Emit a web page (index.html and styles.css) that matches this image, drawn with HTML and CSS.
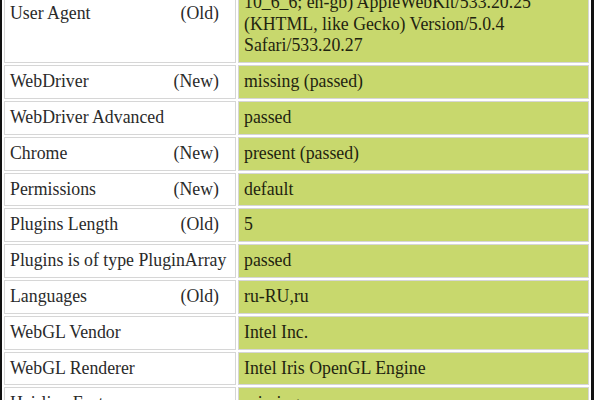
FILE: index.html
```html
<!DOCTYPE html>
<html>
<head>
<meta charset="utf-8">
<link rel="stylesheet" href="styles.css">
</head>
<body>
<table class="results">
  <tr>
    <td class="label"><span>User Agent</span><span class="tag">(Old)</span></td>
    <td class="result">Mozilla/5.0 (Macintosh; U; Intel Mac OS X 10_6_6; en-gb) AppleWebKit/533.20.25 (KHTML, like Gecko) Version/5.0.4 Safari/533.20.27</td>
  </tr>
  <tr>
    <td class="label"><span>WebDriver</span><span class="tag">(New)</span></td>
    <td class="result">missing (passed)</td>
  </tr>
  <tr>
    <td class="label"><span>WebDriver Advanced</span></td>
    <td class="result">passed</td>
  </tr>
  <tr>
    <td class="label"><span>Chrome</span><span class="tag">(New)</span></td>
    <td class="result">present (passed)</td>
  </tr>
  <tr>
    <td class="label"><span>Permissions</span><span class="tag">(New)</span></td>
    <td class="result">default</td>
  </tr>
  <tr>
    <td class="label"><span>Plugins Length</span><span class="tag">(Old)</span></td>
    <td class="result">5</td>
  </tr>
  <tr>
    <td class="label"><span>Plugins is of type PluginArray</span></td>
    <td class="result">passed</td>
  </tr>
  <tr>
    <td class="label"><span>Languages</span><span class="tag">(Old)</span></td>
    <td class="result">ru-RU,ru</td>
  </tr>
  <tr>
    <td class="label"><span>WebGL Vendor</span></td>
    <td class="result">Intel Inc.</td>
  </tr>
  <tr>
    <td class="label"><span>WebGL Renderer</span></td>
    <td class="result">Intel Iris OpenGL Engine</td>
  </tr>
  <tr>
    <td class="label"><span>Hairline Feature</span></td>
    <td class="result">missing</td>
  </tr>
</table>
</body>
</html>
```

FILE: styles.css
```css
html, body {
  margin: 0;
  padding: 0;
  background: #ffffff;
  overflow: hidden;
}

.results {
  margin-top: -41px;
  margin-left: -1px;
  border: 3px solid #111111;
  border-collapse: separate;
  border-spacing: 2px;
  table-layout: fixed;
  width: 595px;
  font-family: "Liberation Serif", "Times New Roman", serif;
  font-size: 17.8px;
  line-height: 21.8px;
  color: #2a2a2a;
}

.results td {
  box-sizing: border-box;
  border: 1px solid #d6d6d6;
  padding: 5px;
  vertical-align: middle;
}

.label {
  width: 232px;
  white-space: nowrap;
}

.label span {
  display: inline-block;
}

.label .tag {
  float: right;
  margin-right: 11px;
}

.result {
  width: 351px;
  background: #c8d86d;
  border-color: #e6ecc4;
  color: #1f2410;
}
```
